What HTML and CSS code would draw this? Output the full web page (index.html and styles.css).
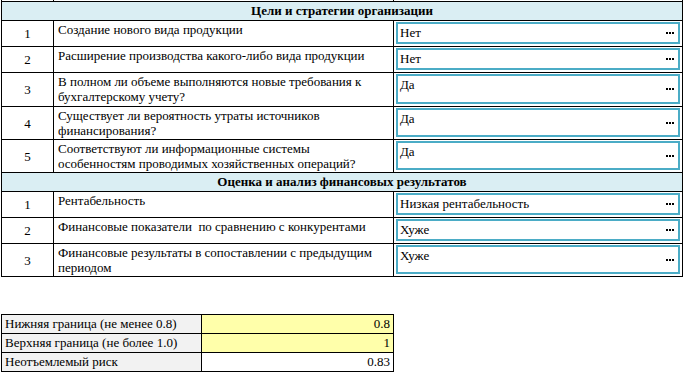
FILE: index.html
```html
<!DOCTYPE html>
<html lang="ru">
<head>
<meta charset="utf-8">
<title>Цели и стратегии организации</title>
<link rel="stylesheet" href="styles.css">
</head>
<body>
<div class="sheet">
  <div class="stub"></div><div class="stub"></div><div class="stub"></div>

  <div class="head">Цели и стратегии организации</div>

  <div class="num r26">1</div>
  <div class="q">Создание нового вида продукции</div>
  <div class="a"><div class="box"><span class="val">Нет</span><span class="dots"></span></div></div>

  <div class="num r26">2</div>
  <div class="q">Расширение производства какого-либо вида продукции</div>
  <div class="a"><div class="box"><span class="val">Нет</span><span class="dots"></span></div></div>

  <div class="num r34">3</div>
  <div class="q">В полном ли объеме выполняются новые требования к бухгалтерскому учету?</div>
  <div class="a"><div class="box"><span class="val">Да</span><span class="dots"></span></div></div>

  <div class="num r33">4</div>
  <div class="q">Существует ли вероятность утраты источников финансирования?</div>
  <div class="a"><div class="box"><span class="val">Да</span><span class="dots"></span></div></div>

  <div class="num r33">5</div>
  <div class="q">Соответствуют ли информационные системы особенностям проводимых хозяйственных операций?</div>
  <div class="a"><div class="box"><span class="val">Да</span><span class="dots"></span></div></div>

  <div class="head">Оценка и анализ финансовых результатов</div>

  <div class="num r26">1</div>
  <div class="q">Рентабельность</div>
  <div class="a"><div class="box"><span class="val">Низкая рентабельность</span><span class="dots"></span></div></div>

  <div class="num r26">2</div>
  <div class="q">Финансовые показатели&nbsp; по сравнению с конкурентами</div>
  <div class="a"><div class="box"><span class="val">Хуже</span><span class="dots"></span></div></div>

  <div class="num r33">3</div>
  <div class="q">Финансовые результаты в сопоставлении с предыдущим периодом</div>
  <div class="a"><div class="box"><span class="val">Хуже</span><span class="dots"></span></div></div>
</div>

<div class="limits">
  <div class="lbl">Нижняя граница (не менее 0.8)</div>
  <div class="v yellow">0.8</div>
  <div class="lbl">Верхняя граница (не более 1.0)</div>
  <div class="v yellow">1</div>
  <div class="lbl">Неотъемлемый риск</div>
  <div class="v">0.83</div>
</div>
</body>
</html>
```
FILE: styles.css
```css
html, body {
  margin: 0;
  padding: 0;
  background: #ffffff;
}

body {
  font-family: "Liberation Serif", "Times New Roman", serif;
  font-size: 13px;
  color: #000000;
  padding-left: 1px;
}

.sheet {
  display: grid;
  grid-template-columns: 52px 340px 289px;
  border-left: 1px solid #000;
  width: max-content;
}

.sheet > div {
  border-right: 1px solid #000;
  border-bottom: 1px solid #000;
  box-sizing: border-box;
}

.stub {
  height: 2px;
}

.head {
  grid-column: 1 / -1;
  height: 19px;
  background: #daeef3;
  font-weight: bold;
  text-align: center;
  line-height: 17px;
}

.num {
  display: flex;
  align-items: center;
  justify-content: center;
  line-height: 15px;
}

.r26 { height: 26px; }
.r33 { height: 33px; }
.r34 { height: 34px; }

.q {
  padding: 1px 4px 0 4px;
  line-height: 15px;
}

.a {
  padding: 1px 2px 2px 2px;
  display: flex;
}

.box {
  flex: 1;
  border: 2px solid #4bacc6;
  display: flex;
  align-items: flex-start;
  padding: 1px 4px 0 2px;
  line-height: 16px;
}

.val {
  flex: 1;
}

.dots {
  align-self: center;
  width: 8px;
  height: 2px;
  margin-top: -1px;
  background: repeating-linear-gradient(to right, #000 0 2px, transparent 2px 3px);
}

.limits {
  margin-top: 37px;
  display: grid;
  grid-template-columns: 200px 192px;
  border-left: 1px solid #000;
  border-top: 1px solid #000;
  width: max-content;
}

.limits > div {
  border-right: 1px solid #000;
  border-bottom: 1px solid #000;
  height: 19px;
  box-sizing: border-box;
  line-height: 18px;
}

.lbl {
  background: #f2f2f2;
  padding-left: 3px;
}

.v {
  text-align: right;
  padding-right: 3px;
}

.yellow {
  background: #ffffaa;
}
```
